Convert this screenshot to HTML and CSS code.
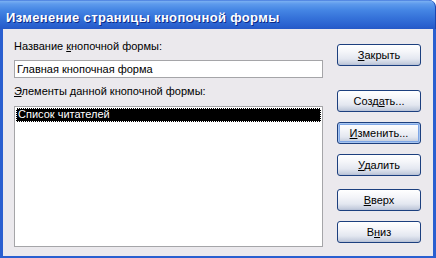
FILE: index.html
```html
<!DOCTYPE html>
<html lang="ru">
<head>
<meta charset="utf-8">
<title>Изменение страницы кнопочной формы</title>
<link rel="stylesheet" href="styles.css">
</head>
<body>
<div class="window">
  <div class="titlebar"><span class="title">Изменение страницы кнопочной формы</span></div>
  <div class="client">
    <div class="left">
      <div class="label">Название <u>к</u>нопочной формы:</div>
      <div class="input">Главная кнопочная форма</div>
      <div class="label label2"><u>Э</u>лементы данной кнопочной формы:</div>
      <div class="list">
        <div class="item selected"><span>Список читателей</span></div>
      </div>
    </div>
    <div class="buttons">
      <div class="btn b-close"><u>З</u>акрыть</div>
      <div class="btn b-create">Созд<u>а</u>ть...</div>
      <div class="btn b-edit focus"><u>И</u>зменить...</div>
      <div class="btn b-del"><u>У</u>далить</div>
      <div class="btn b-up"><u>В</u>верх</div>
      <div class="btn b-down">В<u>н</u>из</div>
    </div>
  </div>
</div>
</body>
</html>
```
FILE: styles.css
```css
html, body {
  margin: 0;
  padding: 0;
  background: #ffffff;
}
body {
  font-family: "Liberation Sans", Arial, sans-serif;
  font-size: 11px;
  color: #000;
}
.window {
  width: 436px;
  height: 258px;
  box-sizing: border-box;
  display: flex;
  flex-direction: column;
  background: #2a5fd0;
  border-top-right-radius: 7px;
  overflow: hidden;
}
.titlebar {
  height: 29px;
  flex: none;
  box-sizing: border-box;
  padding: 0 0 0 6px;
  display: flex;
  align-items: center;
  background: linear-gradient(to bottom, #2f62d4 0px, #7ab0f2 1px, #5d9aec 4px, #4586e4 10px, #3572d9 18px, #2a62d0 25px, #2558c6 29px);
  border-right: 1px solid #1a46b0;
  border-top-right-radius: 7px;
}
.title {
  color: #ffffff;
  font-family: "Liberation Sans", Arial, sans-serif;
  font-weight: bold;
  font-size: 13px;
  letter-spacing: 0.35px;
  text-shadow: 1px 1px 0 #0b2a8a;
  padding-top: 5px;
}
.client {
  flex: 1;
  margin: 0 3px 2px 3px;
  background: #ebe9ed;
  display: flex;
  padding: 11px 12px 0 11px;
  box-sizing: border-box;
}
.left {
  width: 310px;
  display: flex;
  flex-direction: column;
}
.label {
  line-height: 13px;
  height: 13px;
  white-space: nowrap;
}
.label2 {
  margin-top: 7px;
}
.input {
  margin-top: 7px;
  height: 18px;
  box-sizing: border-box;
  border: 1px solid #a5a5a8;
  background: #fff;
  padding: 0 0 0 2px;
  line-height: 16px;
}
.list {
  margin-top: 8px;
  width: 309px;
  height: 141px;
  box-sizing: border-box;
  border: 1px solid #a5a5a8;
  background: #fff;
  padding: 1px;
}
.item {
  height: 14px;
  line-height: 12px;
  box-sizing: border-box;
}
.selected {
  background: #000;
  color: #fff;
  outline: 1px dotted #fff;
  outline-offset: -1px;
  padding-left: 2px;
}
.buttons {
  margin-left: 14px;
  width: 85px;
  display: flex;
  flex-direction: column;
  padding-top: 4px;
}
.btn {
  height: 22px;
  box-sizing: border-box;
  border: 1px solid #1c3f7e;
  border-radius: 3px;
  background: linear-gradient(to bottom, #ffffff 0%, #f4f5f9 35%, #e3e7f0 70%, #c6cede 92%, #b4bed4 100%);
  text-align: center;
  line-height: 20px;
  white-space: nowrap;
}
.focus {
  box-shadow: inset 0 0 0 1px #a8c6f0, inset 0 0 0 2px #7ea6e6;
}
.b-create { margin-top: 24px; }
.b-edit { margin-top: 10px; }
.b-del { margin-top: 10px; }
.b-up { margin-top: 13px; }
.b-down { margin-top: 10px; }
```
